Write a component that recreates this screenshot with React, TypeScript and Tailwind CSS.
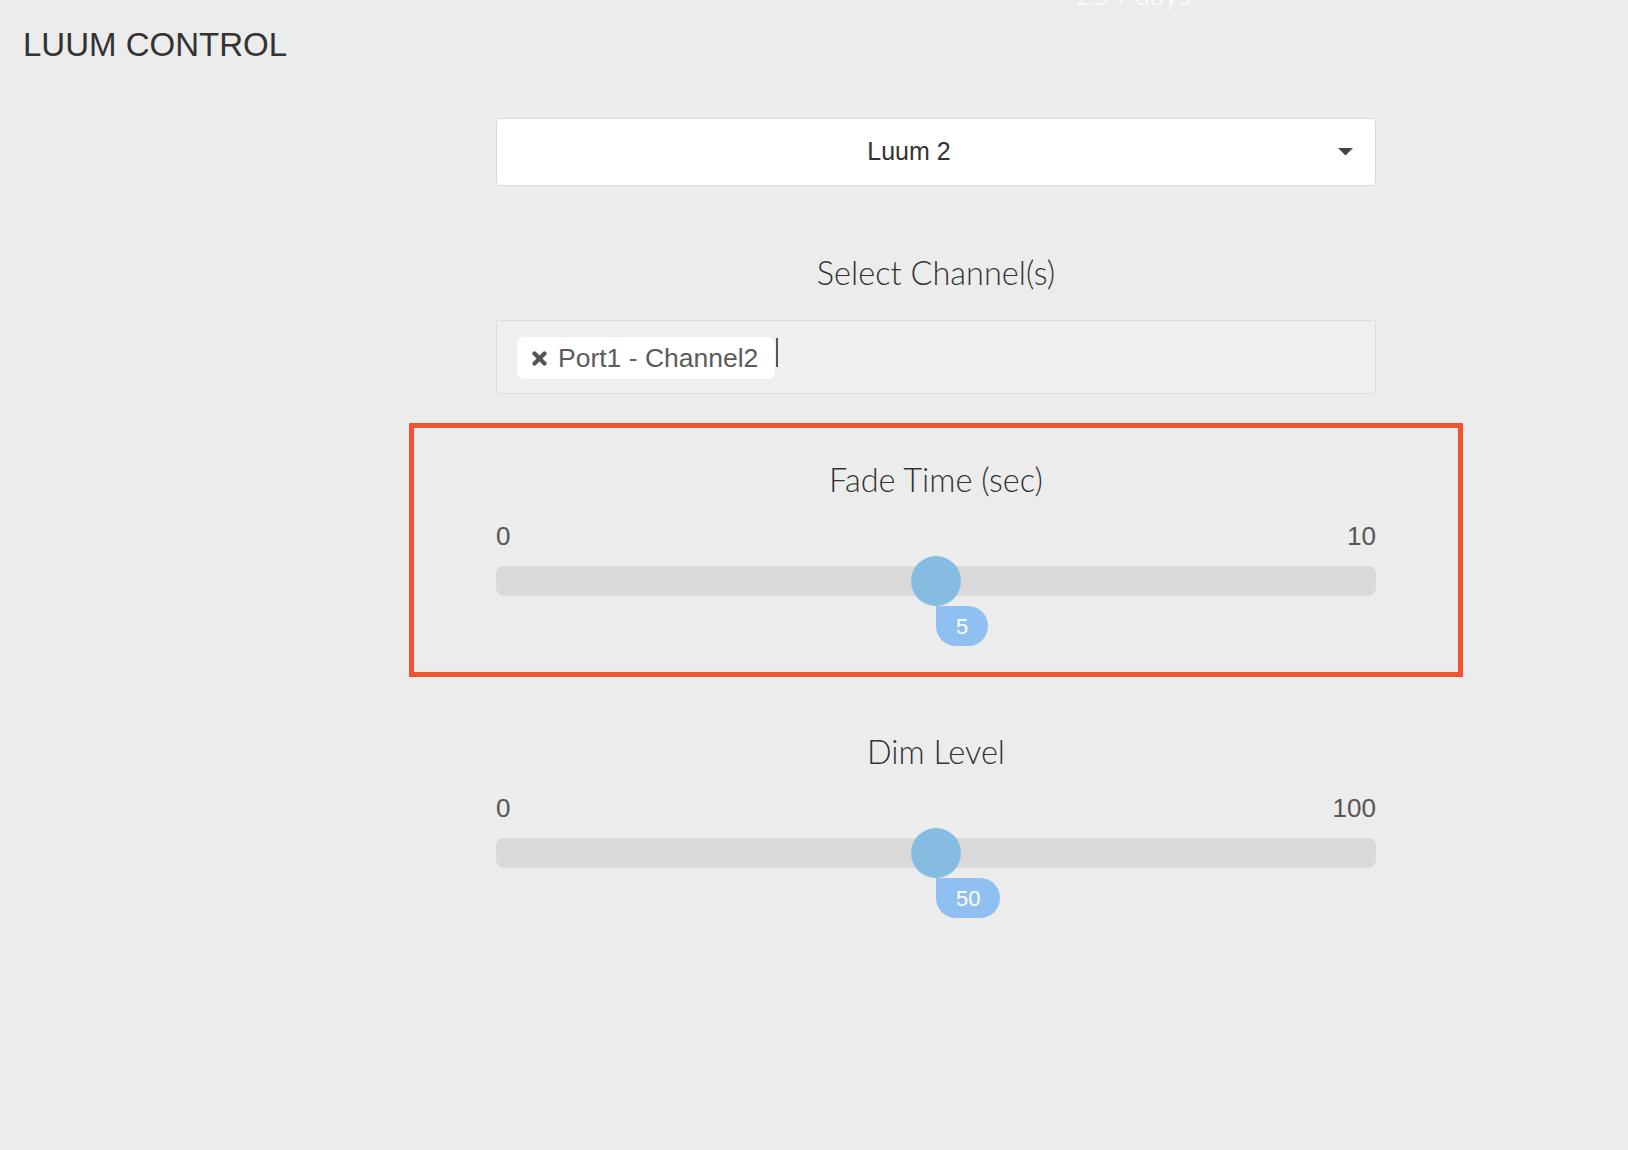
import React from "react";

const SANS = "font-['Liberation_Sans',Arial,sans-serif]";
const LIGHT = "font-['Lato','Roboto','Liberation_Sans',sans-serif] font-light";

function SliderSection({ title, max, value, pct }: { title: string; max: string; value: string; pct: number }) {
  return (
    <div className="flex flex-col">
      <div className={`${LIGHT} text-center text-[32.5px] leading-[36px] text-[#333]`}>{title}</div>
      <div className={`${SANS} mt-[23px] flex justify-between text-[26px] leading-[30px] text-[#555]`}>
        <span>0</span>
        <span>{max}</span>
      </div>
      <div className="relative mt-[15px] h-[80px]">
        <div className="h-[30px] w-full rounded-[8px] bg-[#d9d9d9]" />
        <div
          className="absolute top-[-10px] h-[50px] w-[50px] -translate-x-1/2 rounded-full bg-[#86bce1]"
          style={{ left: `${pct}%` }}
        />
        <div
          className={`${SANS} absolute top-[40px] flex h-[40px] items-center rounded-tr-[20px] rounded-br-[20px] rounded-bl-[20px] bg-[#8fc0f1] px-[20px] text-[22px] text-white`}
          style={{ left: `${pct}%` }}
        >
          {value}
        </div>
      </div>
    </div>
  );
}

export default function App() {
  return (
    <div className="relative min-h-screen w-full overflow-hidden bg-[#ececec]">
      <span className={`${LIGHT} absolute left-[1076px] top-[-20px] text-[29px] leading-[28px] text-white`}>254 days</span>
      <h1 className={`${SANS} pl-[23px] pt-[27px] text-[33px] leading-[36px] text-[#333]`}>LUUM CONTROL</h1>

      <div className="ml-[496px] mt-[55px] flex w-[880px] flex-col">
        {/* Dropdown */}
        <div className="flex h-[68px] items-center rounded-[3px] border border-[#d9d9d9] bg-white">
          <div className={`${SANS} flex-1 text-center text-[25px] text-[#333]`}>Luum 2</div>
          <div className="flex w-[54px] justify-start pl-[17px]">
            <svg width="15" height="8" viewBox="0 0 15 8">
              <path d="M0 0 H15 L7.5 7.5 Z" fill="#444" />
            </svg>
          </div>
        </div>

        {/* Select channels */}
        <div className={`${LIGHT} mt-[69px] text-center text-[32.5px] leading-[36px] text-[#333]`}>Select Channel(s)</div>
        <div className="mt-[29px] flex h-[74px] items-start rounded-[3px] border border-[#dcdcdc] bg-[#efefef] pl-[20px] pt-[16px]">
          <div className="flex h-[42px] items-center gap-[11px] rounded-[7px] bg-white pl-[15px] pr-[17px]">
            <svg width="15" height="15" viewBox="0 0 15 15">
              <path d="M2.5 2.5 L12.5 12.5 M12.5 2.5 L2.5 12.5" stroke="#555" strokeWidth="4.2" strokeLinecap="round" />
            </svg>
            <span className={`${SANS} text-[26.5px] leading-[30px] text-[#5b5b5b]`}>Port1 - Channel2</span>
          </div>
          <div className="ml-[1px] mt-[1px] h-[29px] w-[2px] bg-[#555]" />
        </div>

        {/* Fade time (highlighted) */}
        <div className="-mx-[87px] mt-[29px] border-[5px] border-[#ef5532] px-[82px] pb-[26px] pt-[34px]">
          <SliderSection title="Fade Time (sec)" max="10" value="5" pct={50} />
        </div>

        {/* Dim level */}
        <div className="mt-[57px]">
          <SliderSection title="Dim Level" max="100" value="50" pct={50} />
        </div>
      </div>
    </div>
  );
}
